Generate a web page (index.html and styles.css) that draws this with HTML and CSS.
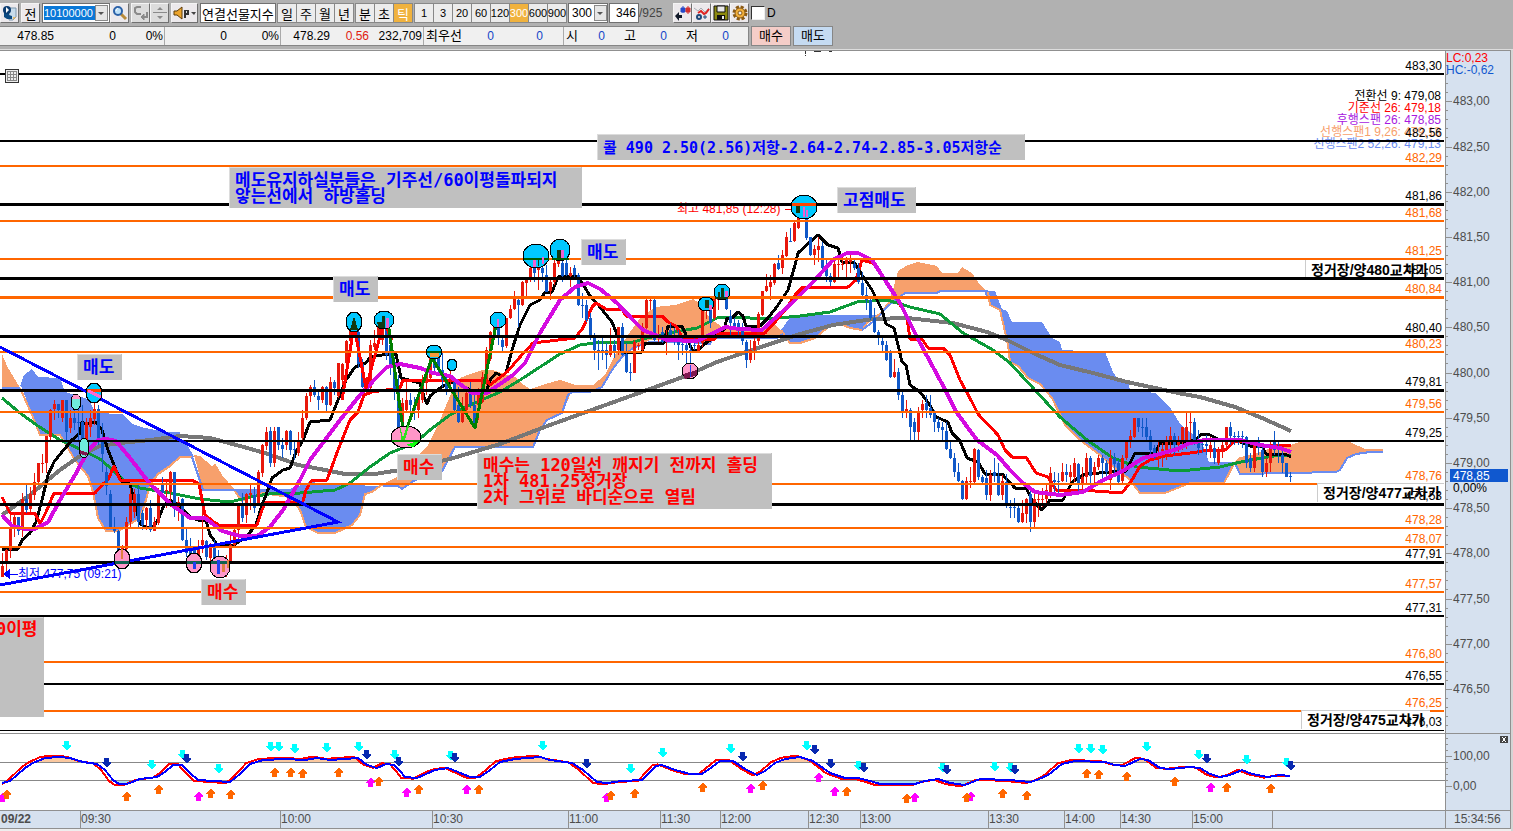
FILE: index.html
```html
<!DOCTYPE html>
<html lang="ko">
<head>
<meta charset="utf-8">
<title>연결선물지수</title>
<link rel="stylesheet" href="styles.css">
</head>
<body>
<header class="bar">
  <div class="tools">
    <button class="tool" aria-label="화면 고정"><svg width="16" height="16" viewBox="0 0 16 16"><path d="M7 3h7v9l-3 3H7z" fill="#c8dcec" stroke="#7c97ad"/><path d="M2 7h5v3l3 1v3H5l-3-2z" fill="#0b4a82"/><circle cx="5" cy="5" r="4" fill="#0b3c70"/><path d="M4 2l3 3-3 3z" fill="#fff"/><path d="M11 15v-3h3z" fill="#e2b96b"/></svg></button>
    <button class="tool gap">전</button>
    <div class="field code"><input class="code-input" aria-label="종목코드" value="10100000"><button class="drop" aria-label="목록"></button></div>
    <button class="tool" aria-label="검색"><svg width="16" height="16" viewBox="0 0 16 16"><path d="M9 9l5 5" stroke="#b98b3a" stroke-width="3"/><circle cx="6" cy="6" r="4" fill="#bfe1f8" stroke="#2c62a8" stroke-width="2"/><path d="M4 6q0-2 2-3" stroke="#fff" fill="none"/></svg></button>
    <button class="tool dim gap" aria-label="되돌리기"><svg width="16" height="16" viewBox="0 0 16 16" fill="none" stroke="#8a8a8a"><path d="M7 3V2H4L2 3v4l2 2h3V8M14 7v5H9" stroke-width="2"/><path d="M11 9l-3 3 3 3z" fill="#8a8a8a"/></svg></button>
    <button class="tool dim" aria-label="위아래"><svg width="16" height="16" viewBox="0 0 16 16" fill="#8a8a8a"><path d="M8 2l3 3H5zM8 14l3-3H5zM1 7h14v1H1z"/></svg></button>
    <button class="tool sound gap" aria-label="소리"><svg width="24" height="16" viewBox="0 0 24 16"><path d="M1 6h3l5-4v12l-5-4H1z" fill="#eda52c" stroke="#5d3c08"/><path d="M11 5h5v5h-3v3h-2z" fill="#333"/><path d="M13 6h1v2h-1z" fill="#ddd"/><path d="M18 7h5l-2 3z" fill="#444"/></svg></button>
    <input class="field name gap" aria-label="종목명" value="연결선물지수">
    <div class="group"><button>일</button><button>주</button><button>월</button><button>년</button></div>
    <div class="group"><button>분</button><button>초</button><button class="on">틱</button></div>
    <div class="group nums"><button>1</button><button>3</button><button>20</button><button>60</button><button>120</button><button class="on">300</button><button>600</button><button>900</button></div>
    <div class="field tick"><input class="tick-input" aria-label="틱" value="300"><button class="drop" aria-label="틱 목록"></button></div>
    <input class="field count" aria-label="표시 개수" value="346"><span class="total">/925</span>
    <button class="tool" aria-label="비교"><svg width="16" height="16" viewBox="0 0 16 16"><path d="M6 3h4v4H6zM8 1v7" fill="#2749c8" stroke="#2749c8"/><path d="M11 3h4v4h-4zM13 1v8" fill="#d33030" stroke="#d33030"/><path d="M0 11l4-4v3h3v3H4v3z" fill="#101828"/></svg></button>
    <button class="tool" aria-label="지표 설정"><svg width="16" height="16" viewBox="0 0 16 16" fill="none"><path d="M0 3l4 3 3-3 4 4 4-4" stroke="#a8aeb4"/><path d="M4 8l3-2 3 3 2-1 3-4" stroke="#d22" stroke-width="2"/><circle cx="5" cy="12" r="2" stroke="#1d4878" stroke-width="2"/><path d="M9 12h4M11 10v4" stroke="#1d4878"/></svg></button>
    <button class="tool" aria-label="저장"><svg width="16" height="16" viewBox="0 0 16 16"><path d="M1 1h14v14H1z" fill="#8c8a10" stroke="#111"/><path d="M4 1h8v6H4z" fill="#e8e8e8" stroke="#111"/><path d="M4 10h8v5H4z" fill="#111"/><path d="M9 11h2v3H9z" fill="#eee"/></svg></button>
    <button class="tool" aria-label="환경설정"><svg width="16" height="16" viewBox="0 0 16 16"><circle cx="8" cy="8" r="6" fill="none" stroke="#8a5a14" stroke-width="3" stroke-dasharray="3 1.700"/><circle cx="8" cy="8" r="5" fill="#f2b03c" stroke="#8a5a14"/><circle cx="8" cy="8" r="2" fill="#eee" stroke="#8a5a14"/></svg></button>
    <label class="daily"><input class="tickbox" type="checkbox">D</label>
  </div>
  <div class="quotes">
    <div class="panel">
      <span class="cell c54">478.85</span><span class="cell c62">0</span><span class="cell c49 edge">0%</span>
      <span class="cell c62">0</span><span class="cell c54 edge">0%</span>
      <span class="cell c49">478.29</span><span class="cell c39 up">0.56</span><span class="cell c55 edge">232,709</span>
      <span class="cell left c39">최우선</span><span class="cell c31 blue">0</span><span class="cell c70 blue edge">0</span>
      <span class="cell left c31">시</span><span class="cell c10 blue">0</span><span class="cell c31 ko">고</span><span class="cell c31 blue">0</span><span class="cell c31 ko">저</span><span class="cell c31 blue">0</span>
    </div>
    <button class="order buy">매수</button><button class="order sell">매도</button>
  </div>
</header>
<main>
<svg class="chart" id="chart" viewBox="0 50 1513 781" role="img" aria-label="연결선물지수 틱 차트">
  <defs>
    <path id="down" d="M-2-4h5v4h2v1L1 5h-1l-4-4V0h2z"/>
    <path id="up" d="M-2 5h5V1h2V0L1-4h-1l-4 4v1h2z"/>
    <clipPath id="over"><path d="M0 734h1445v29H0z"/></clipPath>
    <clipPath id="under"><path d="M0 780h1445v29H0z"/></clipPath>
    <clipPath id="plot"><path d="M0 50h1445v681H0z"/></clipPath>
  </defs>
  <path d="M0 50h1445v779H0z" fill="#fff"/>
  <g class="peach">
    <path d="M2 354L8 368 19 386 20 388H2z"/>
    <path d="M194 455L200 456 212 466 215 463 222 475 234 489H203z"/>
    <path d="M383 484L395 478 410 463 428 445 438 425 450 396 460 378 470 374 482 370H493L501 373 515 377 524 385 530 389 545 384 560 380 575 385H593L605 375 615 355 628 335 640 318 655 307 675 305 693 299 702 305 707 315 715 322 725 329 760 328 773 323 780 330 783 334 777 338H713L710 344 690 340H650L633 348 622 357 612 370 602 387 590 391H572L562 413 547 420 540 430 533 446H455L448 460 440 475 425 477 415 480 402 489 398 485z"/>
    <path d="M878 315L888 302 893 290 898 271 908 265 918 262 937 266 942 273H958L962 267 972 273 980 285 988 292H940L937 293H905L895 300 886 308 878 318z"/>
    <path d="M1234 462L1240 457 1255 454 1265 450 1290 445 1300 442H1350L1365 449H1383V451L1356 454 1347 458 1340 470 1336 472 1240 474 1236 468z"/>
  </g>
  <g class="azure">
    <path d="M20 386L24 375 32 369 38 377 60 378 65 392 75 395 88 399 96 413 122 414 132 424 145 428 165 432H180V440L188 446 194 457H180L170 466 158 474 150 485 146 500 140 518 130 524 118 531H106L98 518 93 492 88 476 75 460 66 445 60 436H40L32 415 22 388z"/>
    <path d="M234 489H290L312 481 318 484 380 486 372 492 365 494 360 515 352 525 335 533H318L306 527 300 510 290 497 262 493 242 501z"/>
    <path d="M781 330L792 315H877L868 322 862 330 850 328 838 323 827 328 815 338 800 343H790z"/>
    <path d="M984 291H995L1002 309 1007 311 1012 322H1042L1052 338 1060 342 1062 350 1105 352 1113 372 1117 378 1128 381 1130 390 1155 393 1170 407 1180 424 1190 432 1200 440 1205 450 1209 462H1235L1224 482H1190L1165 492H1140L1128 478 1117 470 1100 455 1080 440 1065 425 1052 398 1040 384 1028 378 1018 366 1010 362 1008 345 1000 310 990 305z"/>
  </g>
  <g class="edge-peach">
    <path d="M20 388L32 415 40 435H60L66 445 75 460 88 476 93 492 98 518 106 531H118L130 524 140 518 146 500 150 485 158 474 170 466 180 457H192"/>
    <path d="M234 490L242 501 262 493 290 497 300 510 306 527 318 533H335L352 525 360 515 365 494 372 492 383 484"/>
    <path d="M781 330L790 343H800L815 338 827 328 838 323 850 328 862 330 868 322 880 314"/>
    <path d="M988 292L990 305 1000 310 1008 345 1010 362 1018 366 1028 378 1040 384 1052 398 1065 425 1080 440 1100 455 1117 470 1128 478 1140 493H1165L1190 483H1224L1235 462"/>
  </g>
  <g class="edge-azure">
    <path d="M2 388H20M192 457L203 490H290"/>
    <path d="M383 486H398L402 489 415 480 425 477 440 475 448 460 455 447H533L540 430 547 420 562 413 568 395 572 392H590L602 387 612 370 622 357 633 348 650 342H690L710 344 713 338H777L783 334"/>
    <path d="M862 330L878 318 886 308 895 300 905 293H937L940 291H988"/>
    <path d="M1235 463L1240 474 1336 472 1340 470 1347 458 1356 454 1370 452H1383"/>
  </g>
  <path class="ma long" d="M2 515L30 495 60 470 80 456 100 446 120 443 150 440 180 436 210 438 240 446 265 453 285 460 298 465 320 469 345 474H375L400 470 450 459 500 444 550 425 600 407 650 389 683 377 717 362 743 353 773 343 800 334 833 325 873 319 907 318 953 323 987 332 1007 340 1033 353 1060 365 1093 373 1127 382 1183 394 1200 397 1235 407 1262 418 1291 431"/>
  <path class="ma green" d="M2 398L20 413 38 426 60 440 80 449 100 459 115 472 125 482 140 488 170 493 200 499 230 502 250 497 275 493H300L335 490 350 483 370 467 390 453 415 443 430 430 450 415 470 405 500 392 520 380 540 367 560 354 580 345 600 342 630 343 647 338 670 333 697 328 717 318 733 317 767 319 800 316 830 312 857 302 887 300 910 307 940 314 963 333 993 350 1010 363 1033 388 1060 417 1087 440 1113 458 1137 467 1180 471 1220 467 1245 461 1280 455H1291"/>
  <path class="ma black" d="M2 549H18L22 540 30 533 36 522 42 500 48 475 54 462 62 452 72 440 80 433 82 422 86 424 96 422 102 430 108 450 116 470 122 482 130 484 136 507 140 524 146 527H153L158 520 164 505 170 500 180 506 190 517 198 520H206L210 535 214 540 217 545H234L246 537 256 525 262 505 266 495 272 478 283 470 290 468 296 452 303 440 310 422 330 420 334 410 340 395 346 380 355 367 366 363 370 357 388 354H396L401 378 420 383 424 397 427 404 430 396 440 388 450 382H456L465 387 475 393H486L490 380 496 373 502 376 506 373 512 350 520 325 530 305 540 300 545 292H552L558 277 578 276 590 296 600 307 612 322 618 337 622 352H642L645 343H664L668 326H682L686 335 692 350H698L706 343 724 330 727 318H732L738 312 743 316 746 326H760L768 318 776 308 788 290 795 265 798 253 812 240 818 235 828 245 838 248 842 262H854L862 275 872 290 882 310 886 324 894 328 902 362 906 365 910 385 920 392 930 405 936 417 948 422 952 433 960 441 967 458 978 462 985 474H1002L1015 488H1026L1032 500 1042 510 1050 500H1063L1072 482 1085 474 1126 471 1135 453H1155L1160 443H1180L1195 440 1202 434H1208L1220 440H1235L1250 446H1262L1266 454H1285L1291 457"/>
  <path class="ma red" d="M2 497L10 513H35L40 524 46 512 54 493H95L103 484 108 480 114 466 120 480H192L199 484 205 515 214 522 219 525H257L262 510 266 502H295L302 505 306 490 312 480H327L338 450 350 420 358 412 364 395 372 392 400 388 403 380H487L490 385 507 372 520 357 533 343 575 338 583 328 592 307 596 303 606 309H622L626 316H662L668 322 676 326 682 337 713 340 720 333H765L775 322 785 310 795 295 803 287H848L856 280 862 260 873 263 893 292 907 317 910 339H922L928 348H943L950 355 960 380 972 402 978 414 998 435 1005 450 1012 457H1026L1036 473 1048 477 1056 490H1082L1122 493 1132 480 1140 466 1150 460 1165 456 1190 453 1210 450H1225L1235 441 1250 442 1262 445H1291"/>
  <g id="candles"></g>
  <path class="ma magenta" d="M2 515L12 526 25 529H35L48 522 60 500 75 475 88 451 98 440 106 439 116 441 130 458 150 484 172 505 190 518H205L222 531 240 536H257L270 527 283 510 300 480 310 460 340 420 360 395 375 379 387 367 400 364 420 368 433 373 450 376 460 384 472 393H487L500 384 513 375 525 363 540 333 560 300 575 287 588 283 600 289 617 303 633 320 643 330 667 340 697 341 710 335 725 327 740 329 762 330 773 320 793 302 813 282 833 260 847 253H858L872 260 883 277 900 303 920 343 940 380 957 413 977 440 997 455 1010 470 1023 483 1035 492 1060 495 1083 492 1103 480 1123 471 1143 458 1160 454 1177 449 1190 443 1205 440H1240L1260 445 1280 448 1291 452"/>
  <path class="ma red" d="M342 400L354 326 366 388 384 322 392 340"/>
  <path class="ma zig" d="M388 322L404 436 432 358 475 428 496 325"/>
  <g class="small end" clip-path="url(#plot)">
    <text class="ink" x="1441" y="100">전환선 9: 479,08</text>
    <text class="t-red" x="1441" y="112">기준선 26: 479,18</text>
    <text class="t-violet" x="1441" y="124">후행스팬 26: 478,85</text>
    <text class="t-peach" x="1441" y="136">선행스팬1 9,26: 479,13</text>
    <text class="t-azure" x="1441" y="148">선행스팬2 52,26: 479,13</text>
  </g>
  <path d="M1305 259h139v20h-139zM1317 483h127v20h-127zM1301 709h142v20h-142z" fill="#fff"/>
  <path d="M1305.500 279v-19.500h128M1317.500 502v-18.500h126M1301.500 729v-18.500h128" fill="none" stroke="#ccc"/>
  <text class="small t-red" x="677" y="213">최고 481,85 (12:28)</text>
  <path d="M785 209h11" stroke="#f00"/>
  <text class="small t-blue" x="18" y="578">최저 477,75 (09:21)</text>
  <path d="M18 574.500h-8" stroke="#00f"/><path d="M3 574l7-5v10z" fill="#00f"/>
  <g id="levels"></g>
  <g class="station">
    <text x="1311" y="275">정거장/양480교차가</text>
    <text x="1323" y="498">정거장/양477교차가</text>
    <text x="1307" y="725">정거장/양475교차가</text>
  </g>
  <path d="M0 347L338 522 0 585" class="trend"/>
  <g class="marks">
    <g class="cyan"><ellipse cx="94" cy="393" rx="8" ry="10"/><ellipse cx="354" cy="322" rx="8" ry="10"/><ellipse cx="384" cy="320" rx="10" ry="9"/><ellipse cx="434" cy="352" rx="8" ry="7"/><ellipse cx="452" cy="365" rx="5" ry="6"/><ellipse cx="498" cy="320" rx="8" ry="8"/><ellipse cx="536" cy="256" rx="13" ry="12"/><ellipse cx="560" cy="250" rx="10" ry="11"/><ellipse cx="706" cy="304" rx="8" ry="7"/><ellipse cx="722" cy="292" rx="8" ry="8"/><ellipse cx="804" cy="207" rx="13" ry="12"/></g>
    <g class="pink"><ellipse cx="122" cy="559" rx="8" ry="10"/><ellipse cx="194" cy="563" rx="8" ry="10"/><ellipse cx="220" cy="567" rx="10" ry="11"/><ellipse cx="406" cy="437" rx="15" ry="11"/><ellipse cx="690" cy="371" rx="8" ry="8"/></g>
    <g class="mint"><ellipse cx="76" cy="402" rx="5" ry="8"/><ellipse cx="84" cy="448" rx="5" ry="10"/></g>
  </g>
  <g class="inner">
    <path d="M87 389h14v3H87z" fill="#ff4500"/><path d="M88 391l13 6" stroke="#ff69d0" stroke-width="3"/>
    <path d="M73 395h6l1 4h-8z" fill="#ff96c8"/><path d="M80 450l8 3-2 3-6-2z" fill="#801850"/>
    <path d="M354 316l4 14h-8z" fill="#123a12"/><path d="M377 322h5v6h-3zM382 316h3v12h-3z" fill="#123a12"/><path d="M386 318h3v10h-3z" fill="#f060d0"/>
    <path d="M430 352h9v5h-9z" fill="#f99a3a"/><path d="M427 351h14v2h-14z" fill="#005a00"/><path d="M497 319h2v8h-2z" fill="#f060d0"/>
    <path d="M524 258h25v2h-25z" fill="#005a00"/><path d="M533 260h3v7h-3zM542 257h2v7h-2zM561 250h3v8h-3z" fill="#f060d0"/><path d="M538 260h1v6h-1zM557 250h4v10h-4z" fill="#123a12"/><path d="M552 258h17v2h-17z" fill="#005a00"/>
    <path d="M705 300h4v8h-4zM715 297h13v2h-13zM718 292h2v5h-2zM721 288h3v9h-3z" fill="#123a12"/><path d="M709 305h3v5h-3zM725 291h3v6h-3z" fill="#f060d0"/>
    <path d="M792 203h24v3h-24z" fill="#ff4500"/><path d="M796 206h4v7h-4z" fill="#123a12"/><path d="M803 207h2v10h-2zM806 210h2v7h-2z" fill="#f060d0"/>
    <path d="M392 440h28v2h-28z" fill="#008000"/><path d="M400 426l3 12 4-13 2 1-4 14h-4z" fill="#30e020"/><path d="M406 445l8-3h5l-6 5z" fill="#10ff10"/>
    <path d="M115 561h14v3h-14zM187 561h14v3h-14zM211 561h18v3h-18z" fill="#106050"/><path d="M193 562h3v7h-3zM217 560h3v14h-3z" fill="#2040f0"/><path d="M121 549h2v10h-2zM222 564h3v8h-3zM227 560h2v8h-2z" fill="#e08040"/>
    <path d="M683 374l14-4v5l-12 4z" fill="#801850"/><path d="M690 365h1v12h-1z" fill="#2040f0"/>
  </g>
  <g class="boxes">
    <path d="M77 354h45v26H77zM333 276h45v26h-45zM581 239h45v26h-45zM397 454h45v26h-45zM201 579h45v26h-45zM837 187h79v26h-79zM229 167h353v41H229zM597 134h428v26H597zM477 453h295v56H477zM0 617h44v100H0z"/>
  </g>
  <path class="shine" d="M77.500 380v-25.500H121M333.500 302v-25.500H377M581.500 265v-25.500H625M397.500 480v-25.500H441M201.500 605v-25.500H245M837.500 213v-25.500H915M229.500 208v-40.500H581M597.500 160v-25.500H1024M477.500 509v-55.500H771M0 617.500h43"/>
  <g class="note t-blue">
    <text x="83" y="373">매도</text><text x="339" y="295">매도</text><text x="587" y="258">매도</text><text x="843" y="206">고점매도</text>
    <text x="235" y="186">메도유지하실분들은 기주선/60이평돌파되지</text><text x="235" y="202">앟는선에서 하방홀딩</text>
    <text class="call" x="603" y="153">콜 490 2.50(2.56)저항-2.64-2.74-2.85-3.05저항순</text>
  </g>
  <g class="note t-red">
    <text x="403" y="473">매수</text><text x="207" y="598">매수</text><text x="-4" y="635">0이평</text>
    <text x="483" y="471">매수는 120일선 깨지기 전까지 홀딩</text><text x="483" y="487">1차 481.25정거장</text><text x="483" y="503">2차 그위로 바디순으로 열림</text>
  </g>
  <g fill="#ececec" stroke="#333"><path d="M5.500 69.500h13v13h-13z"/><path d="M7.500 71.500h9v9h-9zM10.500 71v10M13.500 71v10M7 74.500h10M7 77.500h10" stroke="#888" fill="none"/></g>
  <path d="M805 51h1v3h-1zM805 55h1v1h-1zM814 50h7v2h-7zM829 50h3v2h-3z" fill="#333"/>
  <path d="M0 733.500h1510M0 762.500h1445M0 780.500h1445" stroke="#888"/>
  <g id="oscillator"></g>
  <g id="signals"></g>
  <path d="M1445 50h65v779h-65zM0 811h1510v18H0z" fill="#d6e1ef"/>
  <path d="M1511 50h2v781h-2z" fill="#d4d4d4"/><path d="M0 829h1511v2H0z" fill="#eee"/>
  <path d="M1445.500 50v779M1510.500 50v779M0 50.500h1511M0 733.500h1510M0 810.500h1510M0 828.500h1510" stroke="#909090"/>
  <g id="axis"></g>
  <text class="small t-red" x="1446" y="62">LC:0,23</text><text class="small t-hc" x="1446" y="74">HC:-0,62</text>
  <path d="M1450 469h58v13h-58z" fill="#1058cf"/>
  <text class="small" fill="#fff" x="1453" y="480">478,85</text><text class="small ink" x="1453" y="492">0,00%</text>
  <path d="M1500 736h8v7h-8z" fill="#444"/><path d="M1502 737l4 5M1506 737l-4 5" stroke="#fff"/>
</svg>
</main>
<script src="chart.js"></script>
</body>
</html>
```
FILE: styles.css
```css
* { box-sizing: border-box; }
body { margin: 0; background: #fff; font-family: "Liberation Sans", "Noto Sans CJK KR", sans-serif; font-size: 12px; color: #000; }
main { display: block; }
button, input { font: inherit; color: inherit; margin: 0; padding: 0; border-radius: 0; }
.bar { background: #b1b1b1; height: 50px; padding-top: 3px; border-bottom: 1px solid #ddd; }
.tools { display: flex; height: 20px; font-size: 13px; }
.tool { width: 19px; height: 20px; padding: 0; display: flex; align-items: center; justify-content: center; background: #ece9ec; border: 1px solid; border-color: #f4f4f4 #707070 #707070 #f4f4f4; flex: none; }
.tool svg { flex: none; display: block; }
.dim { background: #dcdcdc; }
.sound { width: 27px; }
.gap { margin-left: 2px; }
.field { height: 20px; background: #fff; border: 1px solid #707070; flex: none; }
.code { width: 68px; margin-left: 2px; display: flex; padding: 1px; }
.code-input { width: 51px; border: 0; background: #0a78d7; color: #fff; font-size: 11px; height: 14px; align-self: center; }
.drop { width: 13px; height: 16px; flex: none; margin-left: auto; border: 1px solid #8a8a8a; background: #e6e6e6; position: relative; }
.drop::after { content: ""; position: absolute; left: 2px; top: 6px; border: 3px solid transparent; border-top-color: #555; }
.name { width: 76px; padding-left: 1px; }
.group { display: flex; margin-left: 1px; flex: none; border: 1px solid #888; border-right: 0; }
.group button { width: 19px; height: 18px; border: 0; border-right: 1px solid #888; background: #ececec; display: flex; align-items: center; justify-content: center; }
.group .on { background: #f0b23e; color: #fff; }
.nums { font-size: 11px; }
.tick { width: 40px; display: flex; font-size: 12px; padding: 1px; margin-left: 1px; }
.tick-input { width: 24px; border: 0; text-align: center; }
.count { width: 30px; text-align: right; font-size: 12px; margin-left: 1px; padding-right: 2px; }
.total { width: 34px; font-size: 12px; line-height: 20px; color: #444; }
.daily { display: flex; align-items: center; gap: 2px; margin-left: 2px; font-size: 12px; }
.tickbox { appearance: none; width: 14px; height: 14px; background: #fff; border: 1px solid; border-color: #333 #eee #eee #333; }
.quotes { display: flex; height: 20px; margin-top: 3px; gap: 2px; }
.panel { display: flex; width: 749px; background: #f0f0f0; border: 1px solid #868686; border-left: 0; line-height: 18px; }
.cell { text-align: right; flex: none; white-space: nowrap; }
.left { text-align: left; padding-left: 2px; font-size: 13px; }
.ko { font-size: 13px; }
.edge { border-right: 1px solid #aaa; padding-right: 1px; }
.c10 { width: 10px; }
.c31 { width: 31px; }
.c39 { width: 39px; }
.c49 { width: 49px; }
.c54 { width: 54px; }
.c55 { width: 55px; }
.c62 { width: 62px; }
.c70 { width: 70px; padding-right: 20px; }
.up { color: #e02010; }
.blue { color: #1446c8; }
.order { width: 40px; border: 1px solid #868686; font-size: 13px; line-height: 18px; }
.buy { background: #f5cdc8; }
.sell { background: #c5dbf2; }

.chart { display: block; width: 100%; height: auto; shape-rendering: crispEdges; }
.chart text { font-family: "Liberation Sans", "Noto Sans CJK KR", sans-serif; }
.small { font-size: 12px; }
.end { text-anchor: end; }
.ink { fill: #000; }
.grey { fill: #4d4d4d; }
.strong { font-weight: bold; }
.t-red { fill: #f00; }
.t-blue { fill: #00f; }
.t-hc { fill: #1058cf; }
.t-violet { fill: #a818e0; }
.t-peach { fill: #f7a06c; }
.t-azure { fill: #6a8cf0; }
.t-orange { fill: #f60; }
.peach { fill: #f7a06c; }
.azure { fill: #6a8cf0; }
.edge-peach, .edge-azure { fill: none; stroke: #f7a06c; stroke-width: 2; }
.edge-azure { stroke: #6a8cf0; }
.ma { fill: none; stroke-width: 3; stroke-linejoin: round; }
.long { stroke: #777; stroke-width: 4; }
.green { stroke: #0c9a38; stroke-width: 3; }
.black { stroke: #000; }
.ma.red { stroke: #f00; }
.magenta { stroke: #d40be0; stroke-width: 4; }
.zig { stroke: #008000; }
.trend { fill: none; stroke: #00f; stroke-width: 3; }
.marks { stroke: #000; }
.cyan { fill: #00c8ff; }
.pink { fill: #ff96c8; }
.mint { fill: #6eebdc; }
.boxes { fill: #c0c0c0; }
.shine { fill: none; stroke: #dcdcdc; }
.chart .note text { font-family: "DejaVu Sans Mono", "Noto Sans CJK KR", monospace; font-size: 17px; font-weight: bold; }
.chart .note .call { font-size: 15px; }
.station { font-size: 14px; font-weight: bold; }
.osc { fill: none; stroke-width: 2; }
```
FILE: chart.js
```js
const NS = "http://www.w3.org/2000/svg";
const add = (id, tag, attrs, text) => {
  const el = document.createElementNS(NS, tag);
  for (const k in attrs) el.setAttribute(k, attrs[k]);
  if (text) el.textContent = text;
  document.getElementById(id).append(el);
};
const RED = "#e8180c", BLUE = "#1058c8";

/* Each bar: direction, high, body top, body bottom, low (chart units). */
const bars = `R553 566 577 577,R549 550 563 571,R515 527 550 558,R512 517 528 537,B517 517 531 535,R493 499 530 537,B485 499 510 513,R487 494 509 512,R473 482 495 500,R463 463 482 485,R454 463 464 473,R436 436 463 473,R409 410 437 440,R400 404 409 420,B404 404 410 418,R400 400 418 422,B400 400 432 443,R410 418 428 433,B409 418 423 430,B407 422 423 440,B405 422 440 452,R418 422 443 457,R410 418 427 437,R395 409 419 425,B405 409 440 445,B423 440 454 472,B467 472 486 495,B490 494 527 529,B517 527 531 533,B530 531 553 560,R545 548 560 563,R517 522 549 550,R488 494 522 527,R489 494 512 518,B483 494 522 527,B510 513 525 530,R507 508 520 530,B500 508 530 532,R517 522 531 531,R488 493 523 525,B477 483 493 497,R480 490 491 508,R471 472 492 507,B472 472 507 517,R497 502 507 521,B498 499 540 541,B527 540 553 557,B538 547 557 560,B547 550 565 570,R540 547 560 565,R507 540 545 553,B540 541 557 560,R543 545 558 561,B540 547 560 567,B550 557 575 577,R557 563 573 578,R555 559 569 577,R531 545 562 563,R525 530 545 548,R505 505 530 541,B493 505 518 522,R493 494 515 523,R485 493 495 510,B487 495 508 513,R470 472 503 505,R444 445 473 477,R427 432 446 450,B427 431 463 467,R427 431 463 467,B427 427 445 450,B438 445 449 458,R430 431 445 450,B430 431 450 455,B440 449 450 460,R432 440 453 456,R410 418 438 442,R393 396 418 420,R385 387 396 402,B380 387 395 397,B390 396 400 410,R386 387 400 403,B386 387 405 413,R377 382 405 406,B380 382 388 395,R363 363 396 398,R363 364 380 385,R340 341 363 366,R326 330 341 345,R318 320 331 335,B330 332 364 368,B359 364 387 388,R377 385 388 393,R340 345 388 390,R330 343 347 350,R317 318 335 345,R317 320 340 345,B318 328 355 360,B340 345 368 375,B357 362 390 400,B375 390 430 433,R398 403 425 432,R382 400 410 413,B393 400 405 420,B397 408 410 420,R391 395 410 418,R375 380 400 403,R370 375 383 395,R352 356 378 380,B352 357 368 375,B352 358 368 375,B353 370 380 387,B373 380 390 395,R363 377 380 392,B380 382 410 413,B387 405 422 423,R397 410 422 423,R388 393 410 417,B382 393 405 408,B393 405 428 429,R388 392 405 420,R372 377 402 403,R347 350 380 385,R331 332 359 361,R320 325 333 337,B320 328 335 345,B337 340 347 351,R318 318 346 348,R305 309 318 319,R291 299 309 310,B298 300 305 327,R281 282 305 306,R278 280 283 297,R262 268 279 282,B262 268 273 282,R262 267 270 290,B262 268 273 282,B265 275 292 292,R277 282 291 300,R258 263 282 285,R250 258 264 267,B258 263 276 282,B260 263 275 276,R267 273 276 287,B265 268 275 280,B273 275 305 306,B293 305 306 318,B300 305 320 322,B313 318 337 340,B333 337 350 360,B340 350 351 370,B338 350 351 360,B343 350 355 369,R328 345 355 357,B340 345 353 358,R327 327 350 355,B323 327 355 356,B343 354 372 373,B363 372 373 381,R340 342 373 373,R343 345 346 350,R323 327 350 352,R299 300 328 329,R299 300 301 310,B299 300 340 341,R325 335 337 342,B327 332 342 343,R330 337 342 355,B323 330 335 337,B328 335 342 345,B330 340 345 360,B337 344 345 355,B340 345 350 363,B343 350 351 377,B335 345 346 350,R340 345 351 352,R308 310 343 347,R300 307 310 319,B303 310 323 328,R297 299 318 320,R290 296 300 310,R288 293 297 300,B293 297 309 310,B310 316 323 335,B318 323 327 330,B320 323 330 335,B323 330 341 345,B340 342 360 368,R340 350 360 363,R335 341 350 360,R312 314 341 345,R291 291 315 316,R274 286 291 292,R275 282 287 300,R263 264 283 285,B255 263 269 270,R250 255 268 274,R232 237 256 257,B228 241 242 242,R222 223 241 242,R212 215 228 229,R205 210 215 216,B209 218 238 240,B237 237 255 256,R245 249 255 265,R237 246 250 262,B242 246 268 273,B260 266 276 282,B273 276 282 286,R260 264 282 283,R258 264 265 280,R255 264 265 270,R257 260 264 277,R255 258 262 273,B258 264 268 270,B263 268 282 284,B272 283 295 296,B287 295 300 310,B297 300 318 320,B308 318 332 333,B330 332 336 345,B335 341 345 353,B341 345 360 361,B350 353 377 378,R359 372 377 378,B368 372 395 400,B392 395 413 418,R400 409 413 418,B408 410 427 440,B418 422 432 440,R407 413 432 440,R400 404 410 418,B395 403 410 418,B395 408 415 418,B410 413 422 432,B418 422 428 432,B422 427 430 441,B422 431 449 450,B441 449 458 459,B453 458 472 477,B463 472 481 482,B480 481 499 500,R477 481 499 500,R467 481 482 488,R448 449 482 485,B449 450 477 480,B475 477 482 484,B470 478 495 500,R470 475 495 501,B458 472 476 482,B463 476 495 496,R475 481 495 500,B474 482 503 508,B500 507 508 518,B498 507 508 518,B505 508 522 523,R500 513 522 523,R498 499 514 523,B490 494 522 532,R490 499 522 527,R490 499 500 517,R488 499 500 507,R484 490 499 505,R467 473 495 498,B472 480 482 495,B473 481 482 495,R463 472 481 482,B464 472 475 482,R465 472 477 482,R458 463 477 482,B463 464 485 495,R467 477 485 494,R453 458 477 485,B456 458 476 485,R462 467 475 485,R455 458 467 470,B455 458 463 478,B460 463 472 480,R450 458 480 490,B453 458 464 475,B460 463 482 483,R455 458 481 484,R440 441 458 460,R430 436 440 448,R418 418 437 438,B418 418 427 432,B418 427 428 437,B418 427 437 440,B430 436 450 455,B445 448 458 459,R440 453 458 467,R443 449 455 467,R436 440 450 460,R427 436 441 455,B433 436 445 455,R436 440 445 452,R427 427 440 450,R413 427 440 449,R413 422 423 440,B418 422 440 445,B430 441 448 455,B440 444 445 453,B435 444 446 455,R437 445 450 458,B440 448 458 464,R447 450 463 465,R440 445 450 458,R427 427 445 450,B422 427 436 445,B432 436 437 445,B431 436 437 445,B431 436 437 448,B436 437 463 468,B453 458 468 472,R440 445 468 472,B437 440 448 455,B445 450 472 477,R458 463 472 477,R440 445 463 472,B431 440 450 455,B440 448 450 463,B450 455 463 473,B463 463 477 477,B472 476 477 482`;
bars.split(",").forEach((bar, i) => {
  const [hi, top, bot, lo] = bar.slice(1).split(" ").map(Number);
  const x = 2 + 4 * i, fill = bar[0] === "R" ? RED : BLUE;
  add("candles", "path", { d: `M${x} ${hi}h1V${lo}h-1zM${x - 1} ${top}h3V${bot}h-3z`, fill });
});

/* Horizontal levels: y, line weight, colour (k black / o orange), label. */
[[74,2,"k","483,30"],[141,2,"k","482,56"],[166,2,"o","482,29"],[204.5,3,"k","481,86"],[221,2,"o","481,68"],[259,2,"o","481,25"],[278.5,3,"k","481,05"],[297.5,3,"o","480,84"],[336.5,3,"k","480,40"],[352,2,"o","480,23"],[390.5,3,"k","479,81"],[412,2,"o","479,56"],[441,2,"k","479,25"],[484,2,"o","478,76"],[504.5,3,"k","478,53"],[528,2,"o","478,28"],[547,2,"o","478,07"],[562.5,3,"k","477,91"],[592,2,"o","477,57"],[616,2,"k","477,31"],[662,2,"o","476,80"],[684,2,"k","476,55"],[711,2,"o","476,25"],[730.5,1,"k","476,03"]].forEach(([y, w, c, label]) => {
  const orange = c === "o";
  const from = y === 711 ? [0, 1301, 1430, 1444] : y === 484 ? [0, 1317, 1317, 1317] : [0, 1444, 1444, 1444];
  add("levels", "path", { d: `M${from[0]} ${y}H${from[1]}M${from[2]} ${y}H${from[3]}`, stroke: orange ? "#ff6600" : "#000", "stroke-width": w });
  add("levels", "text", { x: 1442, y: Math.floor(y) - 4, class: "small end " + (orange ? "t-orange" : "ink") }, label);
});

/* Oscillator and its slower average. */
const slow = [[2,783],[10,781],[17,775],[25,768],[33,763],[45,758],[60,757],[70,758],[83,762],[97,764],[105,770],[113,780],[119,784],[127,784],[140,779],[157,777],[165,772],[173,765],[182,765],[190,773],[198,780],[230,782],[240,774],[250,764],[263,760],[285,759],[305,760],[317,758],[330,760],[345,759],[358,758],[367,765],[377,768],[386,764],[394,765],[400,771],[405,777],[417,778],[435,770],[448,768],[458,772],[470,777],[480,777],[490,770],[500,762],[515,759],[540,757],[550,760],[572,763],[583,770],[597,782],[607,783],[622,781],[642,780],[650,772],[656,766],[662,765],[675,770],[690,774],[702,774],[712,767],[720,761],[733,761],[745,769],[757,775],[765,771],[775,763],[785,759],[800,757],[813,761],[830,773],[845,778],[858,778],[870,781],[880,784],[915,784],[925,781],[938,779],[950,783],[965,785],[980,779],[1010,780],[1030,782],[1037,780],[1048,775],[1062,764],[1075,761],[1105,762],[1115,765],[1125,766],[1140,759],[1148,760],[1160,768],[1170,769],[1190,767],[1200,768],[1210,774],[1220,777],[1230,775],[1242,770],[1252,774],[1268,777],[1280,775],[1290,776]];
const fast = slow.map(([x, y], i) => [i && i < slow.length - 1 ? x - 4 : x, y + (y - 771) * 0.1]);
const line = pts => "M" + pts.map(p => p.join(" ")).join("L");
add("oscillator", "path", { d: line(slow) + "V762H2z", fill: "#fac8a0", "clip-path": "url(#over)" });
add("oscillator", "path", { d: line(slow) + "V780H2z", fill: "#a8dcf0", "clip-path": "url(#under)" });
add("oscillator", "path", { d: "M0 762.5H1445M0 780.5H1445", stroke: "#888" });
add("oscillator", "path", { d: line(fast), class: "osc", stroke: "#f00" });
add("oscillator", "path", { d: line(slow), class: "osc", stroke: "#00f" });

const marks = {
  "#0ff down": "66,745 151,764 182,754 218,768 270,746 278,746 294,748 326,747 358,746 394,754 450,755 542,745 630,768 662,752 730,748 806,745 858,765 942,767 994,766 1010,767 1078,748 1090,748 1102,749 1146,746 1198,754 1246,759 1286,762",
  "#0828b0 down": "106,762 186,758 366,754 398,761 454,757 586,763 742,756 814,749 830,763 863,767 946,769 1014,769 1206,758 1290,765",
  "#f0f up": "2,797 198,796 370,782 406,792 466,789 606,797 750,788 818,777 834,791 914,797 970,796 1210,787",
  "#f60 up": "6,794 126,796 158,789 210,793 230,794 274,772 290,772 302,773 338,772 378,781 418,789 478,789 610,795 634,793 702,787 762,785 846,791 906,798 966,797 1002,793 1026,795 1086,773 1098,774 1126,776 1174,781 1226,787 1270,788"
};
for (const key in marks) {
  const [fill, shape] = key.split(" ");
  marks[key].split(" ").forEach(p => {
    const [x, y] = p.split(",");
    add("signals", "use", { href: "#" + shape, x, y, fill });
  });
}

/* Price scale: 0.1 minor ticks, 0.5 labelled ticks. */
for (let n = 0; n < 75; n++) {
  const price = 483.4 - n / 10, y = Math.round(101.3 + (483 - price) * 90.4) + 0.5;
  if (y > 728) break;
  const major = Math.round(price * 10) % 5 === 0;
  add("axis", "path", { d: `M1446 ${y}h${major ? 6 : 2}`, stroke: "#909090" });
  if (major) add("axis", "text", { x: 1453, y: y + 3.5, class: "small grey" }, price.toFixed(2).replace(".", ","));
}
for (let y = 738.5; y < 794; y += 6) add("axis", "path", { d: `M1446 ${y}h2`, stroke: "#909090" });
[["100,00", 756.5], ["0,00", 786.5]].forEach(([t, y]) => {
  add("axis", "path", { d: `M1446 ${y}h6`, stroke: "#909090" });
  add("axis", "text", { x: 1453, y: y + 3.5, class: "small grey" }, t);
});
[["09:30",80],["10:00",280],["10:30",432],["11:00",568],["11:30",660],["12:00",720],["12:30",808],["13:00",860],["13:30",988],["14:00",1064],["14:30",1120],["15:00",1192],["",1272]].forEach(([t, x]) => {
  add("axis", "path", { d: `M${x + 0.5} 811v17`, stroke: "#909090" });
  if (t) add("axis", "text", { x: x + 1, y: 823, class: "small grey" }, t);
});
add("axis", "text", { x: 1, y: 823, class: "small grey strong" }, "09/22");
add("axis", "text", { x: 1454, y: 823, class: "small grey" }, "15:34:56");
```
